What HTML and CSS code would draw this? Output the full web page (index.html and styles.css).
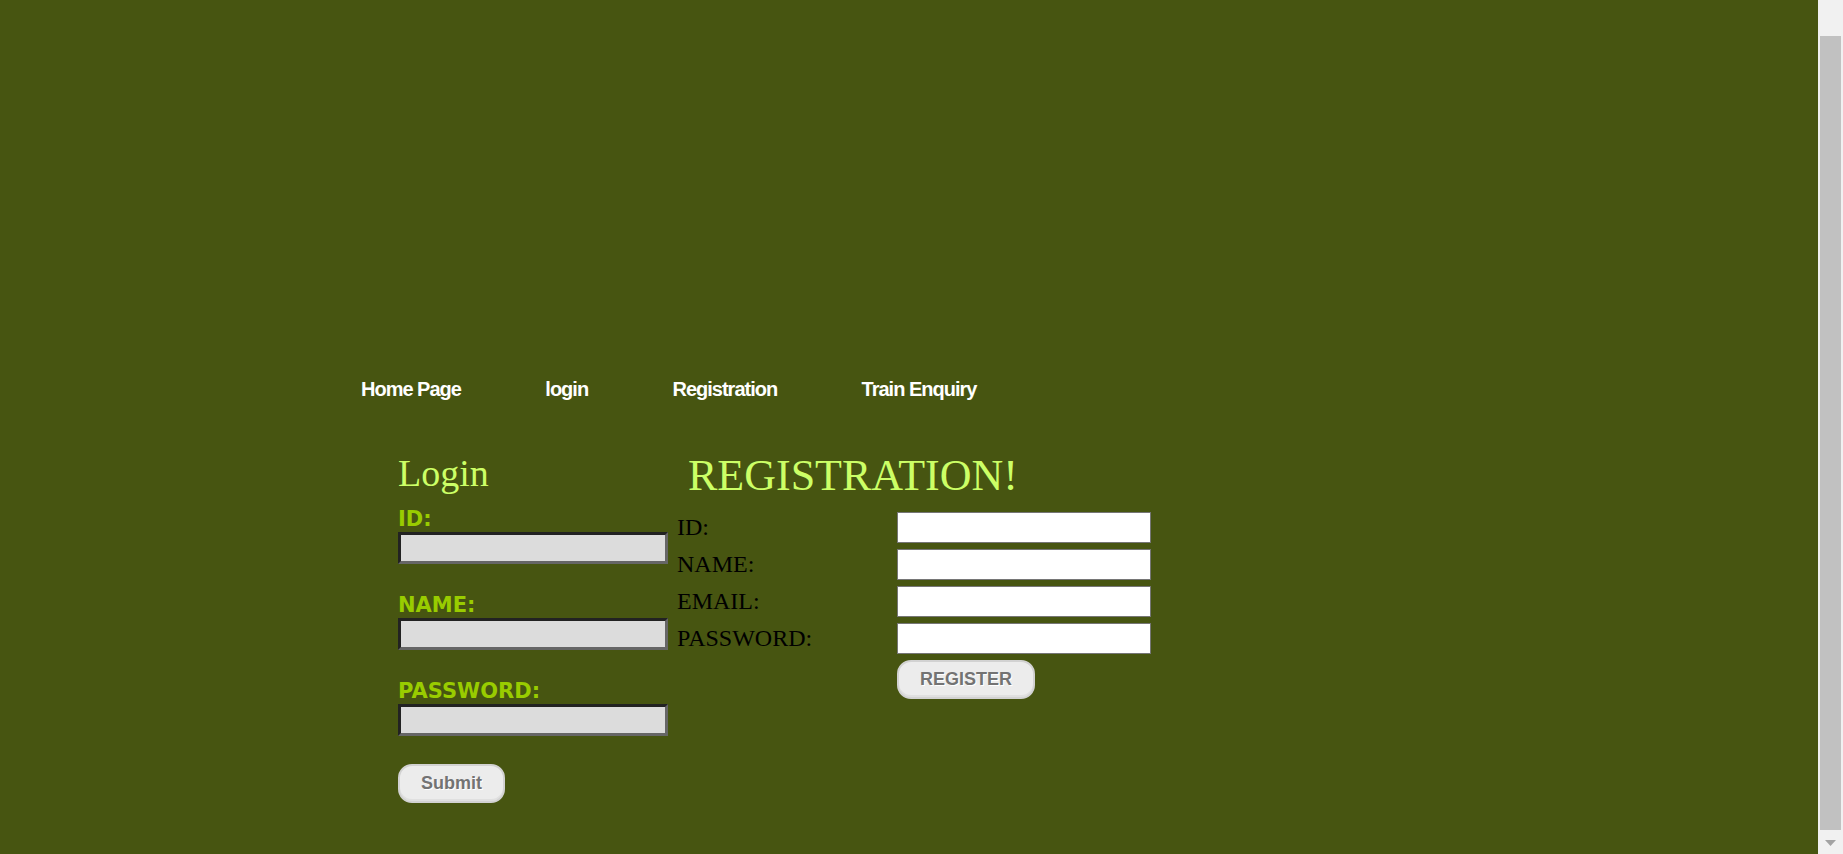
FILE: index.html
```html
<!DOCTYPE html>
<html lang="en">
<head>
<meta charset="utf-8">
<title>Railway Reservation</title>
<link rel="stylesheet" href="styles.css">
</head>
<body>
<div class="page">
  <div class="banner"></div>
  <nav class="nav">
    <a class="nav__link" href="#">Home Page</a>
    <a class="nav__link" href="#">login</a>
    <a class="nav__link" href="#">Registration</a>
    <a class="nav__link" href="#">Train Enquiry</a>
  </nav>
  <main class="content">
    <section class="login">
      <h2 class="login__title">Login</h2>
      <form class="login__form">
        <div class="field">
          <label class="field__label">ID:</label>
          <input class="field__input" type="text">
        </div>
        <div class="field">
          <label class="field__label">NAME:</label>
          <input class="field__input" type="text">
        </div>
        <div class="field">
          <label class="field__label">PASSWORD:</label>
          <input class="field__input" type="password">
        </div>
        <div class="actions">
          <button class="btn" type="button">Submit</button>
        </div>
      </form>
    </section>
    <section class="register">
      <h1 class="register__title">REGISTRATION!</h1>
      <form class="register__grid">
        <label class="register__label">ID:</label>
        <input class="register__input" type="text">
        <label class="register__label">NAME:</label>
        <input class="register__input" type="text">
        <label class="register__label">EMAIL:</label>
        <input class="register__input" type="text">
        <label class="register__label">PASSWORD:</label>
        <input class="register__input" type="password">
        <span class="register__spacer"></span>
        <div class="register__actions">
          <button class="btn" type="button">REGISTER</button>
        </div>
      </form>
    </section>
  </main>
</div>
<div class="scrollbar" aria-hidden="true">
  <div class="scrollbar__thumb"></div>
  <svg class="scrollbar__arrow" width="11" height="6" viewBox="0 0 11 6"><path d="M0 0h11L5.5 6z" fill="#a3a3a3"/></svg>
</div>
</body>
</html>
```
FILE: styles.css
```css
html, body {
  margin: 0;
  padding: 0;
}

body {
  background: #475511;
  font-family: "Liberation Serif", "Times New Roman", serif;
}

.page {
  padding-bottom: 40px;
}

.banner {
  height: 377px;
}

.nav {
  display: flex;
  gap: 84.4px;
  padding-left: 361px;
  height: 24px;
}

.nav__link {
  font-family: "Liberation Sans", Arial, sans-serif;
  font-weight: bold;
  font-size: 20px;
  line-height: 24px;
  letter-spacing: -1px;
  color: #ffffff;
  text-decoration: none;
}

.content {
  display: flex;
  align-items: flex-start;
  margin-top: 50px;
  padding-left: 398px;
}

.login {
  width: 270px;
}

.login__title {
  margin: 0 0 12px;
  font-family: "Liberation Serif", "Times New Roman", serif;
  font-weight: normal;
  font-size: 38px;
  line-height: 44px;
  color: #ccff66;
}

.login__form {
  margin: 0;
}

.field {
  display: flex;
  flex-direction: column;
}

.field + .field {
  margin-top: 29px;
}

.field__label {
  font-family: "DejaVu Sans", Verdana, sans-serif;
  font-weight: bold;
  font-size: 21px;
  line-height: 25px;
  color: #99cc00;
}

.field__input {
  box-sizing: border-box;
  width: 270px;
  height: 32px;
  margin: 0;
  padding: 0 4px;
  border: 3px solid;
  border-color: #222222 #666666 #666666 #222222;
  background: #dcdcdc;
}

.actions {
  margin-top: 28px;
}

.btn {
  box-sizing: border-box;
  height: 39px;
  margin: 0;
  padding: 0 21px;
  border: 2px solid #d2d2d2;
  border-radius: 14px;
  background: #ececec;
  box-shadow: inset 0 -2px 0 #e0e0e0;
  font-family: "Liberation Sans", Arial, sans-serif;
  font-weight: bold;
  font-size: 18px;
  color: #737373;
  text-shadow: 1px 1px 0 #ffffff;
  cursor: pointer;
}

.register {
  margin-left: 9px;
}

.register__title {
  margin: 0 0 11px;
  padding-left: 11px;
  font-family: "Liberation Serif", "Times New Roman", serif;
  font-weight: normal;
  font-size: 44px;
  line-height: 50px;
  color: #ccff66;
}

.register__grid {
  display: grid;
  grid-template-columns: 220px 254px;
  row-gap: 6px;
  align-items: center;
  margin: 0;
}

.register__label {
  font-family: "Liberation Serif", "Times New Roman", serif;
  font-size: 24px;
  color: #000000;
}

.register__input {
  box-sizing: border-box;
  width: 254px;
  height: 31px;
  margin: 0;
  padding: 0 4px;
  border: 1px solid #767676;
  background: #ffffff;
}

.scrollbar {
  position: fixed;
  top: 0;
  right: 0;
  bottom: 0;
  width: 25px;
  background: #f1f1f1;
}

.scrollbar__thumb {
  position: absolute;
  top: 36px;
  left: 2px;
  right: 2px;
  height: 794px;
  background: #c1c1c1;
}

.scrollbar__arrow {
  position: absolute;
  top: 840px;
  left: 7px;
}
```
